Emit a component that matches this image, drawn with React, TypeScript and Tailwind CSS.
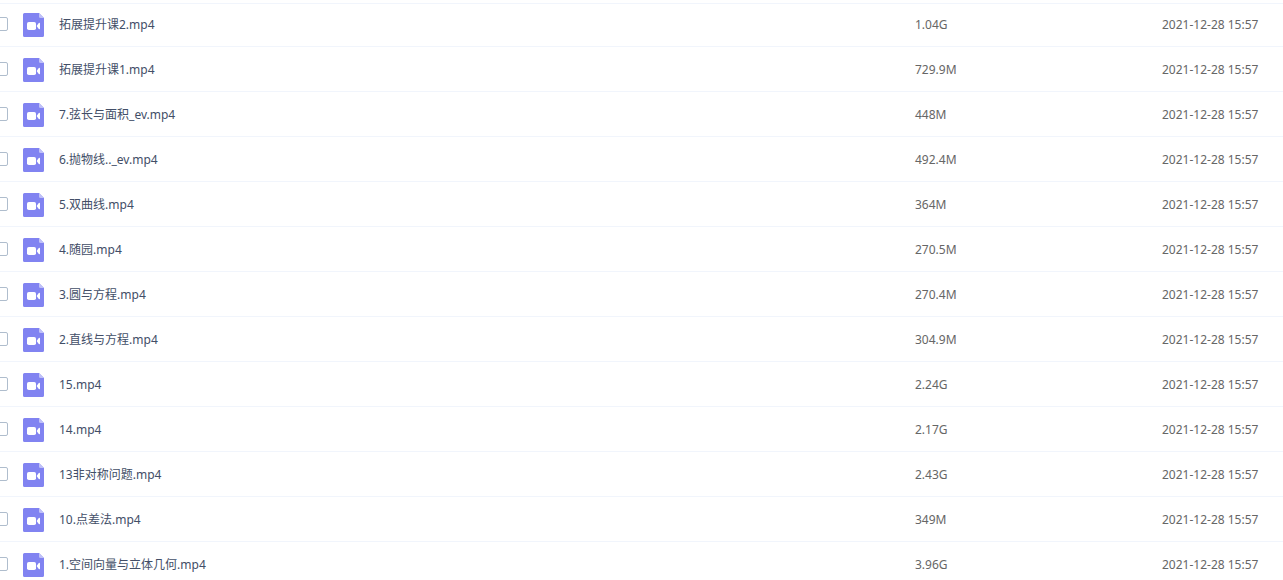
const files = [
  { name: '拓展提升课2.mp4', size: '1.04G', date: '2021-12-28 15:57' },
  { name: '拓展提升课1.mp4', size: '729.9M', date: '2021-12-28 15:57' },
  { name: '7.弦长与面积_ev.mp4', size: '448M', date: '2021-12-28 15:57' },
  { name: '6.抛物线.._ev.mp4', size: '492.4M', date: '2021-12-28 15:57' },
  { name: '5.双曲线.mp4', size: '364M', date: '2021-12-28 15:57' },
  { name: '4.随园.mp4', size: '270.5M', date: '2021-12-28 15:57' },
  { name: '3.圆与方程.mp4', size: '270.4M', date: '2021-12-28 15:57' },
  { name: '2.直线与方程.mp4', size: '304.9M', date: '2021-12-28 15:57' },
  { name: '15.mp4', size: '2.24G', date: '2021-12-28 15:57' },
  { name: '14.mp4', size: '2.17G', date: '2021-12-28 15:57' },
  { name: '13非对称问题.mp4', size: '2.43G', date: '2021-12-28 15:57' },
  { name: '10.点差法.mp4', size: '349M', date: '2021-12-28 15:57' },
  { name: '1.空间向量与立体几何.mp4', size: '3.96G', date: '2021-12-28 15:57' },
];

function VideoIcon() {
  return (
    <svg width="21" height="24" viewBox="0 0 21 24" className="shrink-0" aria-hidden="true">
      <path d="M1.5 0H16l5 5v17.5a1.5 1.5 0 0 1-1.5 1.5h-18A1.5 1.5 0 0 1 0 22.5v-21A1.5 1.5 0 0 1 1.5 0Z" fill="#8183f1" />
      <path d="M16 0l5 5h-3.5A1.5 1.5 0 0 1 16 3.5Z" fill="#c0c1f8" />
      <rect x="4" y="9" width="9" height="8" rx="1.8" fill="#fff" />
      <path d="M13.6 13l2.2-3q1.2-.8 1.2.4v5.2q0 1.2-1.2.4Z" fill="#fff" />
    </svg>
  );
}

export default function App() {
  return (
    <div className="h-screen overflow-hidden bg-white font-['Noto_Sans','Noto_Sans_CJK_SC',sans-serif] text-xs">
      <div className="-mb-0.5 h-1 border-b border-[#f1f5fc]" />
      <table className="w-full table-fixed border-separate border-spacing-0 text-left">
        <colgroup>
          <col />
          <col className="w-[247px]" />
          <col className="w-[121px]" />
        </colgroup>
        <tbody>
          {files.map((file, i) => (
            <tr key={file.name} className="h-[45px]">
              <td className="border-b border-[#f1f5fc] p-0">
                <div className="-ml-1.5 flex items-center">
                  <input
                    id={`file-${i}`}
                    type="checkbox"
                    className="size-3.5 shrink-0 appearance-none rounded-xs border border-[#afbdcd] bg-white checked:bg-[#8183f1]"
                  />
                  <label htmlFor={`file-${i}`} className="ml-[15px] flex items-center gap-[15px] pt-0.5 text-[#424e67]">
                    <VideoIcon />
                    {file.name}
                  </label>
                </div>
              </td>
              <td className="border-b border-[#f1f5fc] p-0 pt-0.5 text-[#666]">{file.size}</td>
              <td className="border-b border-[#f1f5fc] p-0 pt-0.5 text-[#666]">{file.date}</td>
            </tr>
          ))}
        </tbody>
      </table>
    </div>
  );
}
